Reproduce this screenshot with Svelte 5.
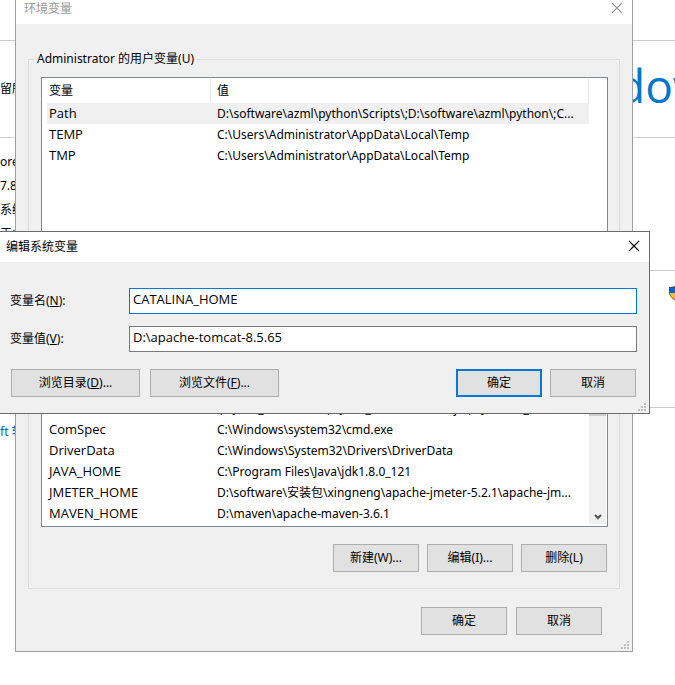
<script lang="ts">
    interface Variable {
        name: string;
        value: string;
    }
    const userVariables: Variable[] = [
        { name: 'Path', value: 'D:\\software\\azml\\python\\Scripts\\;D:\\software\\azml\\python\\;C...' },
        { name: 'TEMP', value: 'C:\\Users\\Administrator\\AppData\\Local\\Temp' },
        { name: 'TMP', value: 'C:\\Users\\Administrator\\AppData\\Local\\Temp' },
    ];
    const systemVariables: Variable[] = [
        { name: 'CLASSPATH', value: '.;%JAVA_HOME%\\lib;%JAVA_HOME%\\lib\\dt.jar;%JMETER_...' },
        { name: 'ComSpec', value: 'C:\\Windows\\system32\\cmd.exe' },
        { name: 'DriverData', value: 'C:\\Windows\\System32\\Drivers\\DriverData' },
        { name: 'JAVA_HOME', value: 'C:\\Program Files\\Java\\jdk1.8.0_121' },
        { name: 'JMETER_HOME', value: 'D:\\software\\安装包\\xingneng\\apache-jmeter-5.2.1\\apache-jm...' },
        { name: 'MAVEN_HOME', value: 'D:\\maven\\apache-maven-3.6.1' },
    ];
    let selected = $state('Path');
    let name = $state('CATALINA_HOME');
    let value = $state('D:\\apache-tomcat-8.5.65');
</script>

{#snippet closeIcon()}
    <svg width="12" height="12" viewBox="0 0 12 12" aria-hidden="true">
        <path d="M1 1 L11 11 M11 1 L1 11" fill="none" stroke="currentColor" stroke-width="1.1" />
    </svg>
{/snippet}

{#snippet grip()}
    <svg class="grip" width="8" height="8" viewBox="0 0 8 8" aria-hidden="true">
        <path d="M6 0h2v2h-2z M3 3h2v2h-2z M6 3h2v2h-2z M0 6h2v2h-2z M3 6h2v2h-2z M6 6h2v2h-2z" fill="#bfbfbf" />
    </svg>
{/snippet}

<div class="desktop">
    <main class="system">
        <section class="top"></section>
        <section class="edition">
            <p>留所有</p>
            <div class="logo">dows</div>
        </section>
        <section class="specs">
            <p>ore</p>
            <p>7.87</p>
            <p>系统</p>
            <p>于此</p>
        </section>
        <section class="computer">
            <svg width="16" height="16" viewBox="0 0 16 16" aria-hidden="true">
                <path d="M8 0 C6 2 3 2 1 2 V7 C1 11 4 14 8 16 C12 14 15 11 15 7 V2 C13 2 10 2 8 0z" fill="#4b4b4b" />
                <path d="M8 1 C6 3 4 3 2 3 V8 H8z" fill="#0067c8" />
                <path d="M2 8 H8 V15 C4 13 2 11 2 8z" fill="#fdb92e" />
                <path d="M8 1 V8 H14 V3 C12 3 10 3 8 1z" fill="#fdb92e" />
                <path d="M8 8 H14 C14 11 12 13 8 15z" fill="#0067c8" />
            </svg>
        </section>
        <section class="activation">
            <a href="#terms">ft 软件</a>
        </section>
    </main>

    <div class="window variables" role="dialog" aria-labelledby="variables-title">
        <header>
            <h1 id="variables-title">环境变量</h1>
            <button class="close" aria-label="关闭">{@render closeIcon()}</button>
        </header>
        <div class="body">
            <fieldset class="user">
                <legend>Administrator 的用户变量(U)</legend>
                <div class="list">
                    <table>
                        <thead>
                            <tr><th>变量</th><th>值</th></tr>
                        </thead>
                        <tbody>
                            {#each userVariables as item}
                            <tr class:selected={item.name === selected} onclick={() => selected = item.name}>
                                <td>{item.name}</td><td>{item.value}</td>
                            </tr>
                            {/each}
                        </tbody>
                    </table>
                </div>
            </fieldset>
            <fieldset class="machine" aria-label="系统变量">
                <div class="list">
                    <table>
                        <tbody>
                            {#each systemVariables as item}
                            <tr><td>{item.name}</td><td>{item.value}</td></tr>
                            {/each}
                        </tbody>
                    </table>
                    <div class="scrollbar">
                        <div class="thumb"></div>
                        <svg width="8" height="7" viewBox="0 0 8 7" aria-hidden="true">
                            <path d="M1 2 L4 5 L7 2" fill="none" stroke="#505050" stroke-width="2" />
                        </svg>
                    </div>
                </div>
                <div class="actions">
                    <button>新建(W)...</button>
                    <button>编辑(I)...</button>
                    <button>删除(L)</button>
                </div>
            </fieldset>
            <div class="actions confirm">
                <button>确定</button>
                <button>取消</button>
            </div>
        </div>
        {@render grip()}
    </div>

    <div class="window editor" role="dialog" aria-labelledby="editor-title">
        <header>
            <h1 id="editor-title">编辑系统变量</h1>
            <button class="close" aria-label="关闭">{@render closeIcon()}</button>
        </header>
        <form class="body" onsubmit={(e) => e.preventDefault()}>
            <div class="field">
                <label for="variable-name">变量名(<u>N</u>):</label>
                <input id="variable-name" class="focused" type="text" bind:value={name} />
            </div>
            <div class="field">
                <label for="variable-value">变量值(<u>V</u>):</label>
                <input id="variable-value" type="text" bind:value={value} />
            </div>
            <div class="actions">
                <div class="browse">
                    <button type="button">浏览目录(<u>D</u>)...</button>
                    <button type="button">浏览文件(<u>F</u>)...</button>
                </div>
                <button type="submit" class="default">确定</button>
                <button type="button">取消</button>
            </div>
        </form>
        {@render grip()}
    </div>
</div>

<style>
    :global(body) {
        background: #fff;
    }
    .desktop {
        position: relative;
        min-height: 100vh;
        overflow: hidden;
        color: #000;
        font-family: "Noto Sans", "Noto Sans CJK SC", sans-serif;
        font-size: 12px;
        line-height: 16px;
    }
    .desktop * {
        box-sizing: border-box;
    }
    p, h1 {
        margin: 0;
        font-size: 12px;
        font-weight: normal;
    }

    /* system page behind the dialogs */
    .system section {
        border-bottom: 1px solid #ccc;
        overflow: hidden;
        white-space: nowrap;
    }
    .system .top {
        height: 41px;
    }
    .edition {
        display: flex;
        justify-content: space-between;
        align-items: center;
        height: 97px;
    }
    .logo {
        width: 58px;
        padding-bottom: 8px;
        color: #0078cc;
        font-family: "Open Sans", sans-serif;
        font-size: 46px;
        line-height: 64px;
    }
    .specs {
        height: 133px;
        padding-top: 12px;
        line-height: 24px;
    }
    .computer {
        display: flex;
        justify-content: flex-end;
        height: 137px;
        padding-top: 14px;
    }
    .computer svg {
        flex: none;
        margin-right: -9px;
    }
    .system .activation {
        padding-top: 16px;
        border: 0;
    }
    .activation a {
        color: #0066cc;
        text-decoration: none;
    }

    .window {
        position: absolute;
        background: #f0f0f0;
    }
    .window header {
        display: flex;
        justify-content: space-between;
        align-items: center;
        background: #fff;
    }
    .variables {
        top: -8px;
        left: 15px;
        right: 42px;
        border: 1px solid #a0a0a0;
    }
    .variables header {
        height: 31px;
        padding: 0 9px 0 8px;
        color: #999;
    }
    .variables .body {
        padding: 26px 12px 16px;
    }
    .close {
        display: flex;
        padding: 0 0 2px;
        border: 0;
        background: none;
        color: inherit;
    }
    .grip {
        position: absolute;
        right: 3px;
        bottom: 2px;
    }
    fieldset {
        min-width: 0;
        margin: 0;
        padding: 0 11px 0 12px;
        border: 1px solid #dcdcdc;
    }
    legend {
        margin-left: -6px;
        padding: 0 2px;
        line-height: 18px;
    }
    .user .list {
        height: 170px;
        margin: 9px 0 60px;
    }
    .machine {
        margin-top: -1px;
        padding-top: 88px;
        padding-bottom: 16px;
    }
    .list {
        display: flex;
        padding: 1px 1px 2px;
        border: 1px solid #828790;
        background: #fff;
    }
    table {
        flex: 1;
        width: 100%;
        min-width: 0;
        margin: 0 17px 0 4px;
        table-layout: fixed;
        border-collapse: separate;
        border-spacing: 0;
        align-self: flex-start;
    }
    th, td {
        height: 21px;
        padding: 0 0 0 6px;
        text-align: left;
        font-weight: normal;
        white-space: nowrap;
        overflow: hidden;
    }
    td:first-child, th:first-child {
        width: 164px;
        padding-left: 2px;
    }
    td:first-child {
        padding-bottom: 2px;
        font-family: "Open Sans", "Noto Sans CJK SC", sans-serif;
        font-size: 13px;
    }
    th {
        height: 24px;
        border-right: 1px solid #e5e5e5;
    }
    .selected {
        background: #f0f0f0;
    }
    .machine table {
        margin-right: 0;
    }
    .scrollbar {
        display: flex;
        flex-direction: column;
        justify-content: space-between;
        align-items: center;
        width: 17px;
        padding-bottom: 4px;
        background: #f0f0f0;
    }
    .thumb {
        width: 100%;
        height: 18px;
        background: #cdcdcd;
    }
    .actions {
        display: flex;
        justify-content: flex-end;
        gap: 8px;
    }
    .machine .actions {
        padding-right: 1px;
        margin-top: 17px;
    }
    .confirm {
        gap: 9px;
        margin-top: 18px;
        padding-right: 18px;
    }
    .actions button {
        width: 86px;
        height: 28px;
        padding: 0 0 1px;
        border: 1px solid #adadad;
        background: #e1e1e1;
        color: #000;
        font: inherit;
    }
    .actions button.default {
        border: 2px solid #0078d7;
    }
    .browse {
        display: flex;
        gap: 10px;
        margin-right: auto;
    }
    .actions .browse button {
        width: 129px;
    }

    .editor {
        top: 231px;
        left: -1px;
        right: 25px;
        border: 1px solid #6b6b6b;
    }
    .editor header {
        height: 30px;
        padding: 0 9px 0 6px;
    }
    .editor .body {
        padding: 26px 12px 16px 10px;
    }
    .field {
        display: flex;
        align-items: center;
        margin-bottom: 12px;
    }
    .field label {
        width: 119px;
    }
    .field input {
        flex: 1;
        min-width: 0;
        height: 26px;
        padding: 0 3px 4px;
        border: 1px solid #7a7a7a;
        outline: 0;
        background: #fff;
        color: #000;
        font: 13px "Open Sans", "Noto Sans CJK SC", sans-serif;
    }
    .field .focused {
        border-color: #0078d7;
    }
    .editor .actions {
        margin-top: 17px;
        padding: 0 1px;
    }
</style>
